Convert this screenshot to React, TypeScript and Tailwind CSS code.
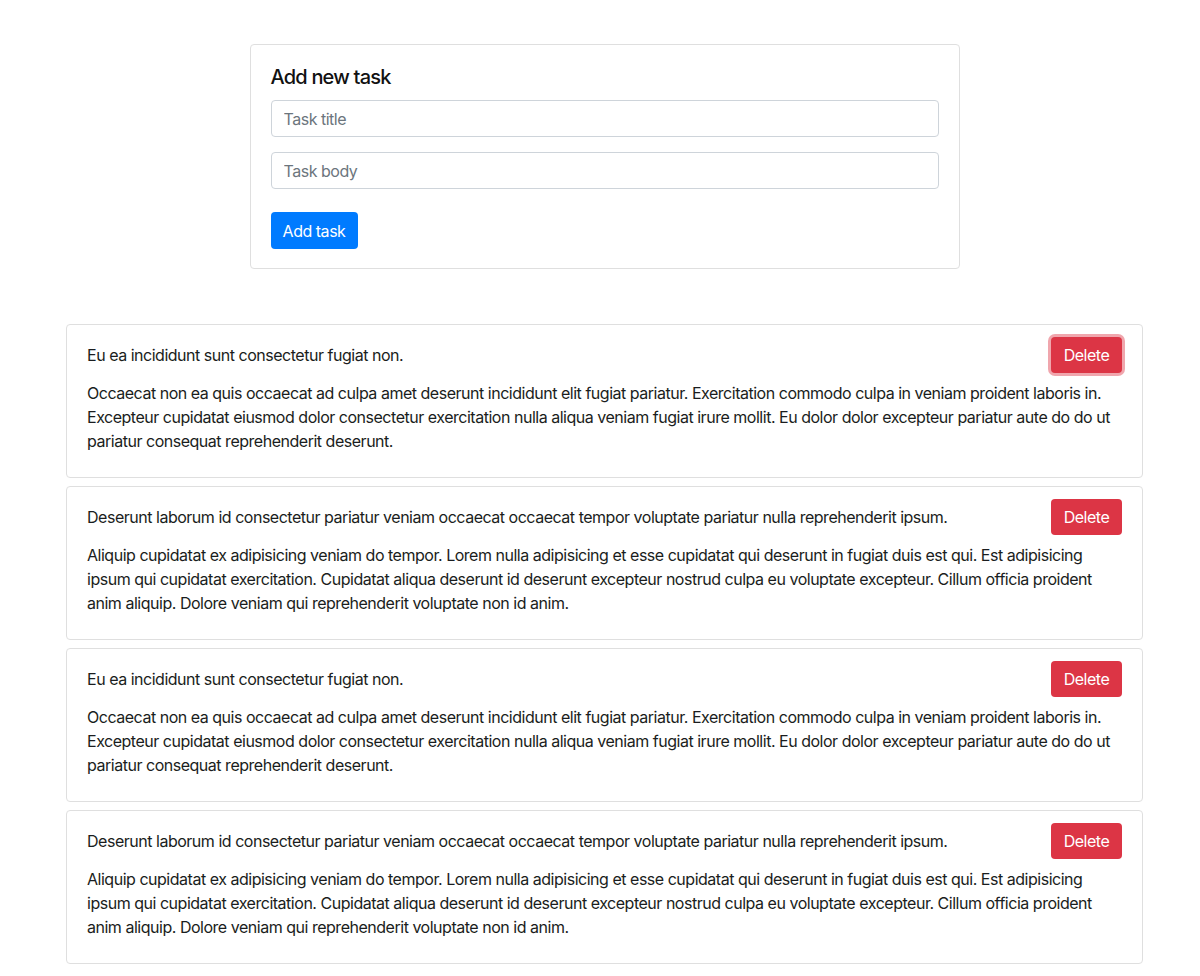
import { useState } from 'react'

type Task = { id: number; title: string; body: string }

const first = {
  title: 'Eu ea incididunt sunt consectetur fugiat non.',
  body: 'Occaecat non ea quis occaecat ad culpa amet deserunt incididunt elit fugiat pariatur. Exercitation commodo culpa in veniam proident laboris in. Excepteur cupidatat eiusmod dolor consectetur exercitation nulla aliqua veniam fugiat irure mollit. Eu dolor dolor excepteur pariatur aute do do ut pariatur consequat reprehenderit deserunt.',
}

const second = {
  title: 'Deserunt laborum id consectetur pariatur veniam occaecat occaecat tempor voluptate pariatur nulla reprehenderit ipsum.',
  body: 'Aliquip cupidatat ex adipisicing veniam do tempor. Lorem nulla adipisicing et esse cupidatat qui deserunt in fugiat duis est qui. Est adipisicing ipsum qui cupidatat exercitation. Cupidatat aliqua deserunt id deserunt excepteur nostrud culpa eu voluptate excepteur. Cillum officia proident anim aliquip. Dolore veniam qui reprehenderit voluptate non id anim.',
}

const initialTasks: Task[] = [
  { id: 1, ...first },
  { id: 2, ...second },
  { id: 3, ...first },
  { id: 4, ...second },
]

export default function App() {
  const [tasks, setTasks] = useState<Task[]>(initialTasks)
  const [title, setTitle] = useState('')
  const [body, setBody] = useState('')

  const addTask = () => {
    if (!title.trim()) return
    setTasks([...tasks, { id: Date.now(), title, body }])
    setTitle('')
    setBody('')
  }

  return (
    <div className="min-h-screen bg-white pl-[66px] pr-[57px] pt-[44px] text-[16px] leading-6 tracking-[-0.03em] text-[#1a1d20] [font-family:Inter,'Liberation_Sans',sans-serif]">
      <div className="mx-auto w-[710px] rounded border border-[#dfdfdf] px-5 pt-5 pb-[19px]">
        <h5 className="mb-[11px] text-[20px] leading-6 font-medium tracking-[-0.04em] text-[#111]">Add new task</h5>
        <input
          value={title}
          onChange={(e) => setTitle(e.target.value)}
          placeholder="Task title"
          className="mb-[15px] block h-[37px] w-full rounded border border-[#ced4da] px-3 text-[16px] outline-none placeholder:text-[#6c757d]"
        />
        <input
          value={body}
          onChange={(e) => setBody(e.target.value)}
          placeholder="Task body"
          className="mb-[23px] block h-[37px] w-full rounded border border-[#ced4da] px-3 text-[16px] outline-none placeholder:text-[#6c757d]"
        />
        <button
          onClick={addTask}
          className="h-[37px] w-[87px] rounded bg-[#007bff] text-[16px] text-white"
        >
          Add task
        </button>
      </div>

      <div className="mt-[55px] flex flex-col gap-2 pb-4">
        {tasks.map((task, i) => (
          <div key={task.id} className="rounded border border-[#dfdfdf] px-5 pt-3 pb-6">
            <div className="flex items-center justify-between gap-4">
              <span>{task.title}</span>
              <button
                onClick={() => setTasks(tasks.filter((t) => t.id !== task.id))}
                className={`h-[36px] w-[71px] shrink-0 rounded bg-[#dc3545] text-[16px] text-white ${i === 0 ? 'ring-[3px] ring-[#f0a6ad]' : ''}`}
              >
                Delete
              </button>
            </div>
            <p className="mt-2">{task.body}</p>
          </div>
        ))}
      </div>
    </div>
  )
}
